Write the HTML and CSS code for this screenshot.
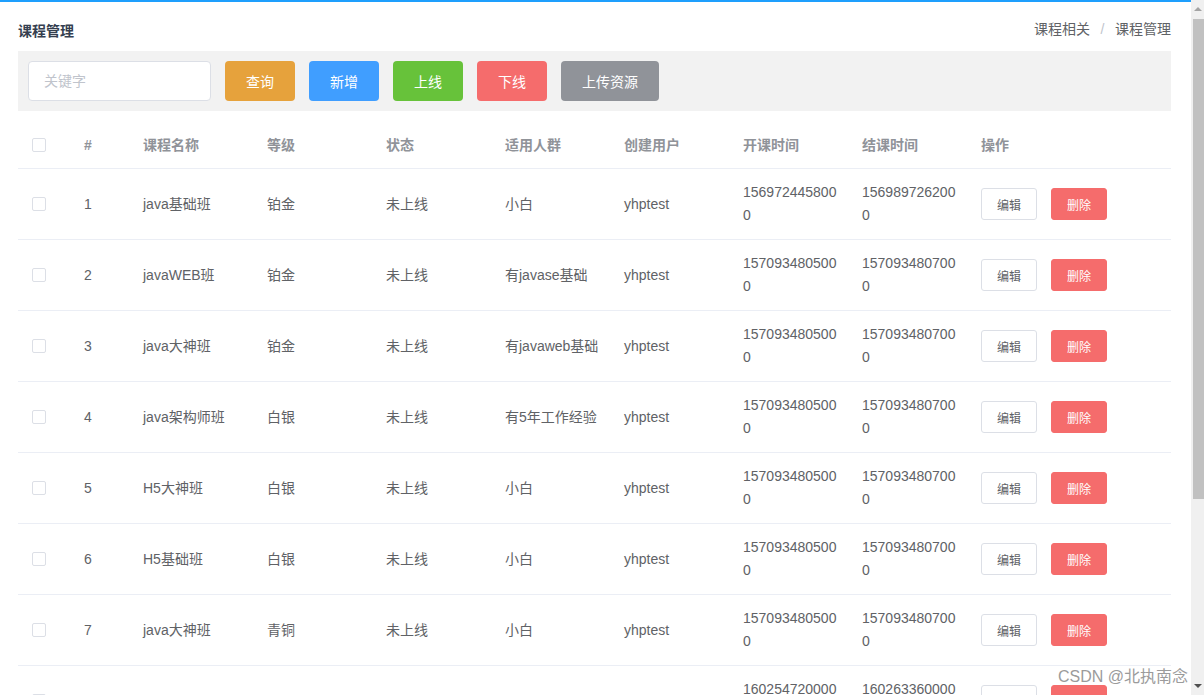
FILE: index.html
```html
<!DOCTYPE html>
<html lang="zh-CN">
<head>
<meta charset="utf-8">
<title>课程管理</title>
<link rel="stylesheet" href="styles.css">
</head>
<body>
<div class="page">
  <div class="main">
    <div class="topbar"></div>
    <div class="content">
      <div class="head">
        <div class="title">课程管理</div>
        <div class="crumb"><span>课程相关</span><span class="sep">/</span><span>课程管理</span></div>
      </div>
      <div class="toolbar">
        <div class="search"><input class="search-input" type="text" placeholder="关键字"></div>
        <button class="btn btn-warning">查询</button>
        <button class="btn btn-primary">新增</button>
        <button class="btn btn-success">上线</button>
        <button class="btn btn-danger">下线</button>
        <button class="btn btn-info">上传资源</button>
      </div>
      <table class="grid">
        <colgroup>
          <col class="c-check"><col class="c-idx"><col class="c-name"><col class="c-std"><col class="c-std"><col class="c-std"><col class="c-std"><col class="c-std"><col class="c-std"><col class="c-op">
        </colgroup>
        <thead>
          <tr>
            <th class="cell-check"><span class="checkbox"></span></th>
            <th>#</th><th>课程名称</th><th>等级</th><th>状态</th><th>适用人群</th><th>创建用户</th><th>开课时间</th><th>结课时间</th><th>操作</th>
          </tr>
        </thead>
        <tbody>
          <tr><td class="cell-check"><span class="checkbox"></span></td><td>1</td><td>java基础班</td><td>铂金</td><td>未上线</td><td>小白</td><td>yhptest</td><td class="time">1569724458000</td><td class="time">1569897262000</td><td class="ops"><button class="sbtn sbtn-plain">编辑</button><button class="sbtn sbtn-danger">删除</button></td></tr>
          <tr><td class="cell-check"><span class="checkbox"></span></td><td>2</td><td>javaWEB班</td><td>铂金</td><td>未上线</td><td>有javase基础</td><td>yhptest</td><td class="time">1570934805000</td><td class="time">1570934807000</td><td class="ops"><button class="sbtn sbtn-plain">编辑</button><button class="sbtn sbtn-danger">删除</button></td></tr>
          <tr><td class="cell-check"><span class="checkbox"></span></td><td>3</td><td>java大神班</td><td>铂金</td><td>未上线</td><td>有javaweb基础</td><td>yhptest</td><td class="time">1570934805000</td><td class="time">1570934807000</td><td class="ops"><button class="sbtn sbtn-plain">编辑</button><button class="sbtn sbtn-danger">删除</button></td></tr>
          <tr><td class="cell-check"><span class="checkbox"></span></td><td>4</td><td>java架构师班</td><td>白银</td><td>未上线</td><td>有5年工作经验</td><td>yhptest</td><td class="time">1570934805000</td><td class="time">1570934807000</td><td class="ops"><button class="sbtn sbtn-plain">编辑</button><button class="sbtn sbtn-danger">删除</button></td></tr>
          <tr><td class="cell-check"><span class="checkbox"></span></td><td>5</td><td>H5大神班</td><td>白银</td><td>未上线</td><td>小白</td><td>yhptest</td><td class="time">1570934805000</td><td class="time">1570934807000</td><td class="ops"><button class="sbtn sbtn-plain">编辑</button><button class="sbtn sbtn-danger">删除</button></td></tr>
          <tr><td class="cell-check"><span class="checkbox"></span></td><td>6</td><td>H5基础班</td><td>白银</td><td>未上线</td><td>小白</td><td>yhptest</td><td class="time">1570934805000</td><td class="time">1570934807000</td><td class="ops"><button class="sbtn sbtn-plain">编辑</button><button class="sbtn sbtn-danger">删除</button></td></tr>
          <tr><td class="cell-check"><span class="checkbox"></span></td><td>7</td><td>java大神班</td><td>青铜</td><td>未上线</td><td>小白</td><td>yhptest</td><td class="time">1570934805000</td><td class="time">1570934807000</td><td class="ops"><button class="sbtn sbtn-plain">编辑</button><button class="sbtn sbtn-danger">删除</button></td></tr>
          <tr><td class="cell-check"><span class="checkbox"></span></td><td></td><td></td><td></td><td></td><td></td><td></td><td class="time">1602547200000</td><td class="time">1602633600000</td><td class="ops"><button class="sbtn sbtn-plain">编辑</button><button class="sbtn sbtn-danger">删除</button></td></tr>
        </tbody>
      </table>
    </div>
    <div class="watermark">CSDN @北执南念</div>
  </div>
  <div class="scrollbar">
    <div class="sb-arrow sb-up"></div>
    <div class="sb-thumb"></div>
    <div class="sb-rest"></div>
    <div class="sb-arrow sb-down"></div>
  </div>
</div>
</body>
</html>
```

FILE: styles.css
```css
html, body {
  margin: 0;
  padding: 0;
  height: 100%;
  overflow: hidden;
  background: #fff;
}
body {
  font-family: "Liberation Sans", "Noto Sans CJK SC", sans-serif;
  font-size: 14px;
  color: #606266;
}
.page {
  display: flex;
  height: 695px;
}
.main {
  position: relative;
  flex: 1;
  overflow: hidden;
}
.topbar {
  height: 2px;
  background: #1e9ffd;
}
.content {
  padding: 0 20px 0 18px;
}
.head {
  display: flex;
  justify-content: space-between;
  align-items: flex-start;
  height: 49px;
}
.title {
  margin-top: 19px;
  font-size: 14px;
  line-height: 20px;
  font-weight: bold;
  color: #353f50;
}
.crumb {
  margin-top: 17px;
  font-size: 14px;
  line-height: 20px;
  color: #606266;
}
.crumb .sep {
  color: #c0c4cc;
  margin: 0 10.5px;
}
.toolbar {
  display: flex;
  align-items: center;
  gap: 14px;
  height: 60px;
  padding: 0 10px;
  background: #f2f2f2;
}
.search-input {
  box-sizing: border-box;
  width: 183px;
  height: 40px;
  padding: 0 15px;
  border: 1px solid #dcdfe6;
  border-radius: 4px;
  background: #fff;
  font-family: inherit;
  font-size: 14px;
  color: #606266;
  outline: none;
}
.search-input::placeholder {
  color: #c0c4cc;
}
.btn {
  box-sizing: border-box;
  height: 40px;
  padding: 0 21px;
  border: 0;
  border-radius: 4px;
  font-family: inherit;
  font-size: 14px;
  color: #fff;
  cursor: pointer;
}
.btn-warning { background: #e6a23c; }
.btn-primary { background: #409eff; }
.btn-success { background: #67c23a; }
.btn-danger { background: #f56c6c; }
.btn-info { background: #909399; }

.grid {
  margin-top: 10px;
  width: 1153px;
  table-layout: fixed;
  border-collapse: collapse;
}
.c-check { width: 51px; }
.c-idx { width: 59px; }
.c-name { width: 124px; }
.c-std { width: 119px; }
.c-op { width: 205px; }
.grid th, .grid td {
  padding: 0 7px 0 15px;
  text-align: left;
  border-bottom: 1px solid #ebeef5;
  vertical-align: middle;
}
.grid th {
  height: 47px;
  font-weight: bold;
  color: #909399;
  line-height: 20px;
}
.grid td {
  height: 70px;
  line-height: 23px;
  color: #606266;
}
.grid .cell-check {
  padding-left: 14px;
}
.checkbox {
  display: block;
  box-sizing: border-box;
  width: 14px;
  height: 14px;
  border: 1px solid #dcdfe6;
  border-radius: 2px;
  background: #fff;
}
.grid td.time {
  word-break: break-all;
}
.ops {
  white-space: nowrap;
}
.sbtn {
  box-sizing: border-box;
  width: 56px;
  height: 32px;
  padding: 0;
  border-radius: 3px;
  font-family: inherit;
  font-size: 12px;
  vertical-align: middle;
  cursor: pointer;
}
.sbtn + .sbtn {
  margin-left: 14px;
}
.sbtn-plain {
  background: #fff;
  border: 1px solid #dcdfe6;
  color: #606266;
}
.sbtn-danger {
  background: #f56c6c;
  border: 1px solid #f56c6c;
  color: #fff;
}
.watermark {
  position: absolute;
  right: 3px;
  bottom: 8px;
  font-size: 16px;
  line-height: 20px;
  color: #9b9b9b;
  text-shadow: 0 0 2px #fff, 0 0 1px #fff;
}
.scrollbar {
  width: 13px;
  flex: none;
  display: flex;
  flex-direction: column;
  background: #f0f0f0;
}
.sb-arrow {
  height: 17px;
  flex: none;
  position: relative;
}
.sb-up::after, .sb-down::after {
  content: "";
  position: absolute;
  left: 3px;
  border-left: 4px solid transparent;
  border-right: 4px solid transparent;
}
.sb-up::after {
  top: 7px;
  border-bottom: 4px solid #a3a3a3;
}
.sb-down::after {
  top: 6px;
  border-top: 4px solid #505050;
}
.sb-thumb {
  margin: 2px 0 0 2px;
  height: 480px;
  background: #c1c1c1;
  flex: none;
}
.sb-rest {
  flex: 1;
}
```
